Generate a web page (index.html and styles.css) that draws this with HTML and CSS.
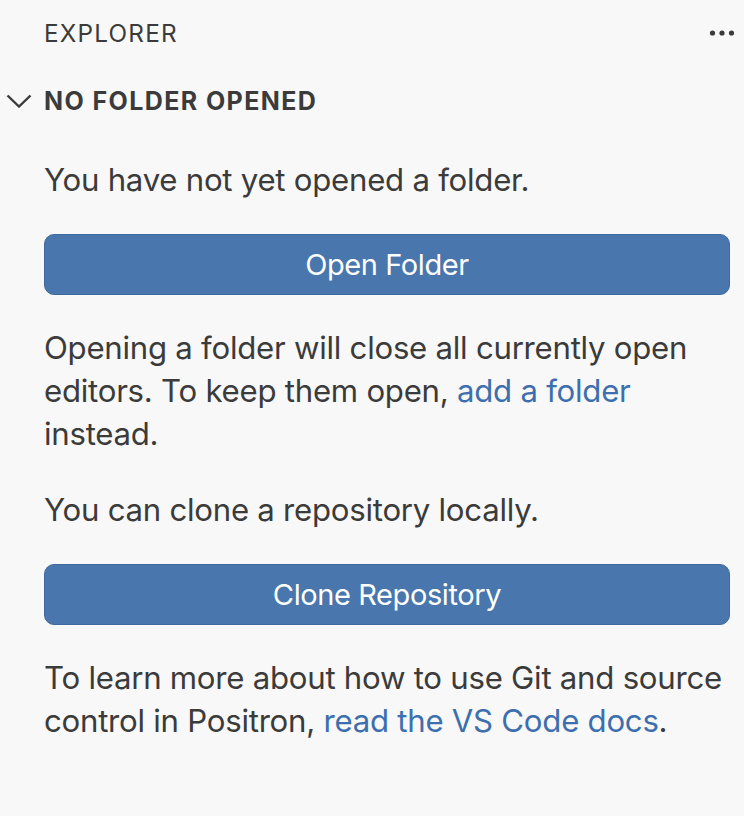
FILE: index.html
```html
<!DOCTYPE html>
<html>
<head>
<meta charset="utf-8">
<link rel="stylesheet" href="styles.css">
</head>
<body>
<div class="pane">
  <div class="title-bar">
    <span class="title">EXPLORER</span>
    <span class="more" aria-label="More actions">
      <svg width="26" height="8" viewBox="0 0 26 8"><circle cx="3.5" cy="4" r="2.6"/><circle cx="13" cy="4" r="2.6"/><circle cx="22.5" cy="4" r="2.6"/></svg>
    </span>
  </div>
  <div class="section-header">
    <svg class="chevron" width="26" height="14" viewBox="0 0 26 14"><path d="M1.5 1.5 L13 12.5 L24.5 1.5"/></svg>
    <span class="section-title">NO FOLDER OPENED</span>
  </div>
  <div class="welcome">
    <p>You have not yet opened a folder.</p>
    <button class="btn">Open Folder</button>
    <p>Opening a folder will close all currently open editors. To keep them open, <a href="#">add a folder</a> instead.</p>
    <p>You can clone a repository locally.</p>
    <button class="btn">Clone Repository</button>
    <p>To learn more about how to use Git and source control in Positron, <a href="#">read the VS Code docs</a>.</p>
  </div>
</div>
</body>
</html>
```
FILE: styles.css
```css
html, body {
  margin: 0;
  padding: 0;
  background: #f8f8f8;
}
body {
  font-family: Inter, "Noto Sans", "Liberation Sans", sans-serif;
  color: #3b3b3b;
  width: 744px;
  height: 816px;
  overflow: hidden;
}
.pane {
  display: flex;
  flex-direction: column;
}
.title-bar {
  display: flex;
  align-items: center;
  justify-content: space-between;
  height: 66px;
  padding: 0 9px 0 44px;
}
.title {
  font-size: 24.3px;
  font-weight: 400;
  letter-spacing: 1.2px;
  color: #3b3b3b;
}
.more svg {
  display: block;
  fill: #3b3b3b;
}
.section-header {
  display: flex;
  align-items: center;
  height: 70px;
  padding-left: 6px;
}
.chevron {
  display: block;
  fill: none;
  stroke: #3b3b3b;
  stroke-width: 2.4;
  stroke-linejoin: miter;
  margin-right: 12px;
}
.section-title {
  font-size: 25px;
  font-weight: 700;
  letter-spacing: 1.4px;
  color: #3b3b3b;
}
.welcome {
  display: flex;
  flex-direction: column;
  gap: 32px;
  padding: 23px 14px 0 44px;
}
.welcome p {
  margin: 0;
  font-size: 31.2px;
  line-height: 43px;
  letter-spacing: -0.26px;
}
.welcome p + p {
  margin-top: 1px;
}
.welcome a {
  color: #3d6fae;
  text-decoration: none;
}
.btn {
  display: block;
  width: 100%;
  height: 61px;
  margin: 0;
  padding: 0;
  border: 1.5px solid #3f6a9d;
  border-radius: 10px;
  background: #4876ad;
  color: #ffffff;
  font-family: inherit;
  font-size: 29px;
  letter-spacing: -0.4px;
  text-align: center;
}
```
